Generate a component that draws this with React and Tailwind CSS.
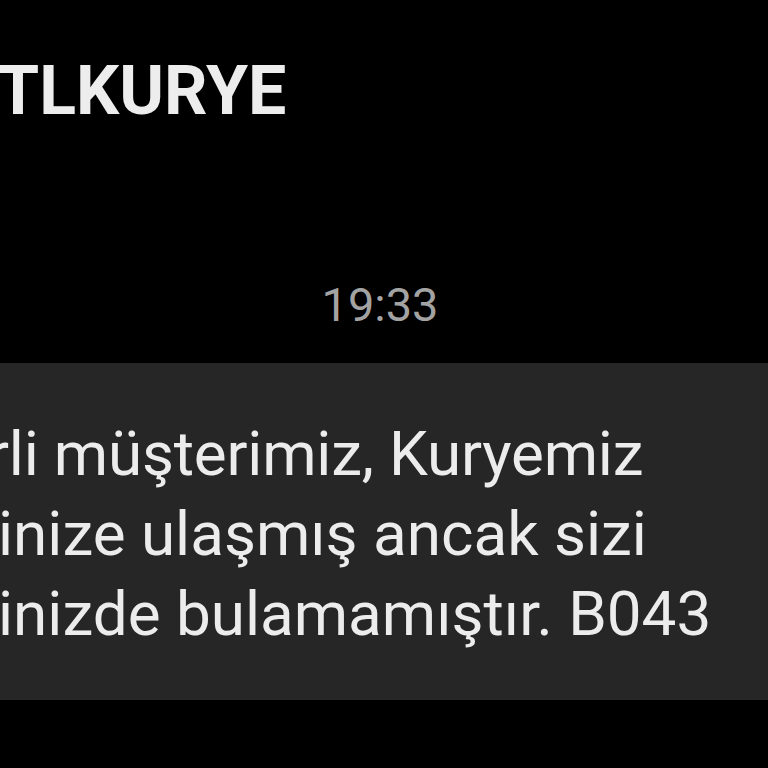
export default function App() {
  return (
    <div className="w-[768px] h-[768px] bg-black overflow-hidden" style={{ fontFamily: "Roboto, 'Noto Sans', sans-serif" }}>
      <div className="pt-[57px] -ml-[3px] text-[68px] leading-none font-bold text-[#ededed] whitespace-nowrap">TLKURYE</div>
      <div className="mt-[156px] flex justify-center pr-[8px] text-[47px] leading-none text-[#a3a3a3]">19:33</div>
      <div className="mt-[35px] bg-[#262626] pt-[51px] pb-[46px] text-[62px] leading-[80px] text-[#ececec] whitespace-nowrap overflow-hidden">
        <div className="-ml-[12px] tracking-[-0.2px]">rli müşterimiz, Kuryemiz</div>
        <div className="-ml-[2px]">inize ulaşmış ancak sizi</div>
        <div className="-ml-[2px]">inizde bulamamıştır. B043</div>
      </div>
    </div>
  );
}
